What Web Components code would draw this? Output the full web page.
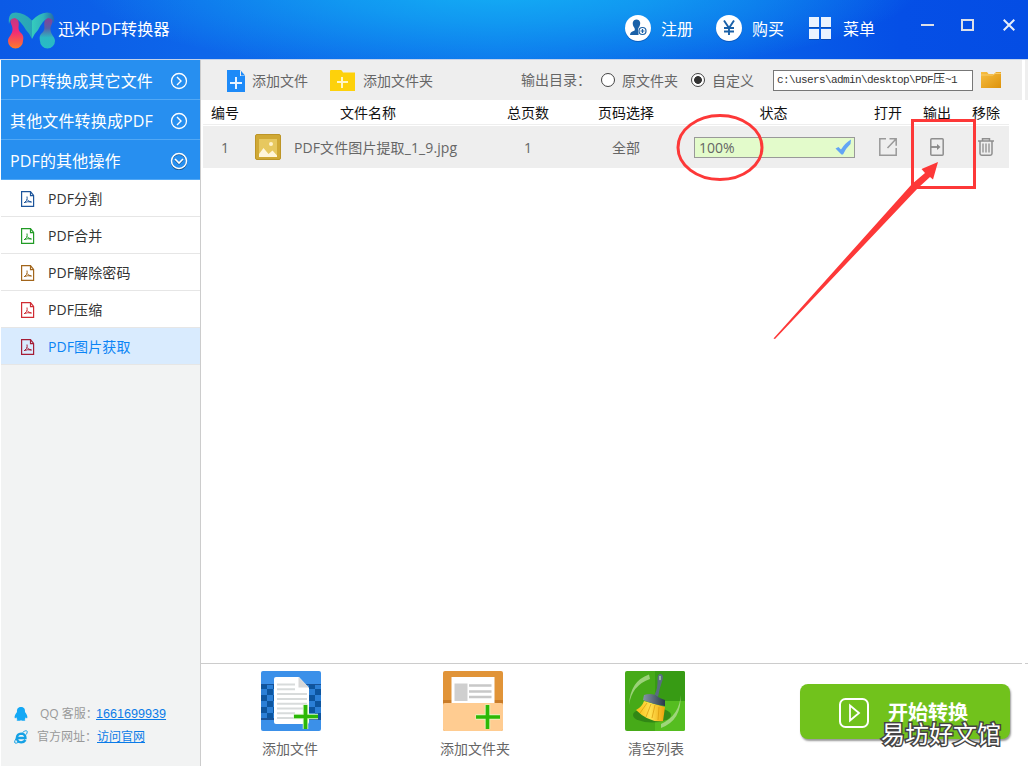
<!DOCTYPE html>
<html lang="zh-CN">
<head>
<meta charset="utf-8">
<title>迅米PDF转换器</title>
<style>
	body {
		margin: 0;
		width: 1028px;
		height: 766px;
		overflow: hidden;
		background: #fff;
		font: 14px/20px "Open Sans", "Noto Sans CJK SC", sans-serif;
		color: #666;
	}
</style>
</head>
<body>
<converter-app></converter-app>

<script>
const icons = {
	logo: [48, 38, `
		<defs>
			<linearGradient id="a" x1="0" y1="0" x2="0" y2="1"><stop offset="0" stop-color="#b93b86"/><stop offset=".45" stop-color="#f02a78"/><stop offset="1" stop-color="#ff7a2a"/></linearGradient>
			<linearGradient id="b" x1="0" y1="0" x2="0" y2="1"><stop offset="0" stop-color="#8a3e96"/><stop offset=".35" stop-color="#5a5fa4"/><stop offset=".65" stop-color="#2bb8c4"/><stop offset="1" stop-color="#27bcc5"/></linearGradient>
			<linearGradient id="c"><stop offset="0" stop-color="#2fb0b5"/><stop offset="1" stop-color="#28a5b8"/></linearGradient>
			<linearGradient id="d"><stop offset="0" stop-color="#35ccbd"/><stop offset=".5" stop-color="#30b4bb"/><stop offset="1" stop-color="#2469a8"/></linearGradient>
		</defs>
		<path d="M4 6q4-2 6 2c2 5-1 8 2 12 4 3 3.500 6 3 9a7.300 7.300 0 0 1-15 0c0-4 4-6 4.500-11C4.800 13 2 12 2.500 8Z" fill="url(#a)"/>
		<path d="M43 6q-4-2-6 2c-2 5 1 8-2 12-4 3-3.500 6-3 9a7.300 7.300 0 0 0 15 0c0-4-4-6-4.500-11-.3-5 2.500-6 2-10Z" fill="url(#b)"/>
		<path d="M1 12C0 3 3 .500 8 .500q9 .5 16 8V27q-2-5-6-9Q12 8 7 6 2 6 1 12Z" fill="url(#c)"/>
		<path d="M46 12C47 3 44 .500 39 .500q-8 .5-15 8V27q2-5 6-9 5-10 10-12 5 0 6 6Z" fill="url(#d)"/>`],
	register: [28, 28, `
		<circle cx="14" cy="15" r="13" fill="#08439c" opacity=".55"/><circle cx="14" cy="14" r="13" fill="#fff"/>
		<path d="M6 21q0-3 3.500-4 2-.5 1-3C7.500 10 8.500 5.500 12.500 5.500s5 4.500 2 8.500q-1 2 0 3v4Z" fill="#1a61a8"/>
		<circle cx="18.500" cy="17" r="4.300" fill="#fff"/><circle cx="18.500" cy="17" r="3.500" fill="#fff" stroke="#1a61a8" stroke-width="1.200"/><path d="M16.500 17h4M18.500 15v4" stroke="#1a61a8" stroke-width="1.200"/>`],
	yen: [28, 28, `
		<circle cx="14" cy="15" r="13" fill="#08439c" opacity=".55"/><circle cx="14" cy="14" r="13" fill="#fff"/>
		<path d="M9 6.500l5 7.500 5-7.500M14 13v8M9 14h10M9 17.500h10" fill="none" stroke="#1a61a8" stroke-width="1.900"/>`],
	grid: [22, 23, `
		<path d="M0 1h10v10H0zM12 1h10v10H12zM0 13h10v10H0zM12 13h10v10H12z" fill="#08439c" opacity=".7"/>
		<path d="M0 0h10v10H0zM12 0h10v10H12zM0 12h10v10H0zM12 12h10v10H12z" fill="#eaf3ff"/>`],
	min: [13, 13, `<path d="M0 6h13" stroke="#dcdfe8" stroke-width="2"/>`],
	max: [13, 13, `<path d="M1 1h11v10H1z" fill="none" stroke="#dcdfe8" stroke-width="2"/>`],
	close: [12, 12, `<path d="M.7.700l10.600 10.600M11.300.700.700 11.300" stroke="#e8eefa" stroke-width="2"/>`],
	right: [18, 18, `<circle cx="9" cy="9" r="7.500" fill="none" stroke="#fff" stroke-width="1.300"/><path d="M7 5l4 4-4 4" fill="none" stroke="#fff" stroke-width="1.400"/>`],
	down: [18, 18, `<circle cx="9" cy="9.800" r="7.500" fill="none" stroke="#18558d" stroke-width="1.500"/><circle cx="9" cy="9" r="7.500" fill="none" stroke="#fff" stroke-width="1.500"/><path d="M5 8l4 4 4-4" fill="none" stroke="#18558d" stroke-width="1.500"/><path d="M5 7l4 4 4-4" fill="none" stroke="#fff" stroke-width="1.600"/>`],
	pdf: [14, 16, `
		<path d="M9.500.600H.600v14.800h12V4.500L9.500.600v4h3.500" fill="none" stroke="currentColor" stroke-width="1.200"/>
		<path d="M6 5.500Q6.500 8 5.500 9.500L3 12M6.200 8.500q1 2 4.300 2.500-4-.8-7 .5" fill="none" stroke="currentColor"/>`],
	qq: [14, 14, `<path d="M7 0C3.500 0 2.800 2.500 3 5 1.500 7 .200 9 .700 11c.5.700 1.200-.3 1.500-.8.2 1 .8 1.600 1.300 2-1 .3-1.200 1.300 0 1.500 1.500.3 2.800 0 3.500-.5.7.5 2 .8 3.500.5 1.200-.2 1-1.200 0-1.500.5-.4 1.100-1 1.300-2 .3.500 1 1.500 1.500.8.4-2-.8-4-2.300-6C11.200 2.500 10.500 0 7 0Z" fill="#14a8f5"/>`],
	ie: [14, 14, `<path d="M11.500 10q-1.500 2.300-4.300 2.300Q3 12 2.800 8 3 4 7.200 3.700q4.300.3 4.300 4.300H4" fill="none" stroke="#15a1e5" stroke-width="2.300"/><path d="M8.500 2.500Q12.500-.5 13.200 1.500q.2 1.200-.9 3M3.500 6.500Q-.5 12 1 13q1 .7 4-1" fill="none" stroke="#15a1e5"/>`],
	newFile: [18, 22, `<path d="M0 0h13l5 6v16H0z" fill="#1d8af8"/><path d="M13 0v6h5z" fill="#eee"/><path d="M14 1 18 5.500H14z" fill="#1d8af8"/><path d="M9 7v12M3 13h12" stroke="#e9f3ff" stroke-width="2"/>`],
	newFolder: [25, 21, `<path d="M0 1q0-1 1-1h10q1 0 2 2.500h12V21H0z" fill="#fdd10b"/><path d="M12 7v11M7 12h11" stroke="#fff6c8" stroke-width="2"/>`],
	folder: [20, 16, `<defs><linearGradient id="f" x1="0" y1="0" x2="1" y2="1"><stop offset="0" stop-color="#f7be42"/><stop offset="1" stop-color="#dd920a"/></linearGradient></defs><path d="M0 0h6l1.500 2H13l2-2h5v16H0z" fill="url(#f)"/><path d="M0 3h12l2-1.500h6" fill="none" stroke="#fad47c" stroke-width=".8"/>`],
	image: [26, 26, `<rect x=".5" y=".5" width="25" height="25" rx="1.500" fill="#d0a935" stroke="#bd9527"/><path d="M4 5h18v18H4z" fill="#e7c85f"/><path d="M4 23v-3l4.500-6 5 6 4-3.500L22 21.500V23z" fill="#fff6da"/><circle cx="16" cy="10" r="2" fill="#fff3cc"/>`],
	check: [17, 16, `<path d="M.5 9.500 3.500 8 6 10.500Q10 4 16 .500L15.500 5Q11 9 8 15.500H6.500Z" fill="#62a5f5"/>`],
	open: [18, 18, `<path d="M7 .800H.800v16.400h16.400V10M10.500.800h6.700v7M17 1l-8.500 9" fill="none" stroke="#999" stroke-width="1.500"/>`],
	output: [14, 18, `<rect x=".8" y=".8" width="12.400" height="16.400" rx="1" fill="none" stroke="#8e8e8e" stroke-width="1.500"/><path d="M1 9h8" stroke="#888" stroke-width="1.800"/><path d="M7 6l3.500 3L7 12z" fill="#888"/>`],
	trash: [16, 18, `<path d="M0 3h16M4.500 3V.800h7V3M2 3v12.500q0 1.700 1.700 1.700h8.600q1.700 0 1.700-1.700V3" fill="none" stroke="#8e8e8e" stroke-width="1.500"/><path d="M5 5.500v9M8 5.500v9M11 5.500v9" stroke="#8e8e8e" stroke-width="1.300"/>`],
	bigFile: [60, 60, `
		<defs><pattern id="p" width="12" height="12" patternUnits="userSpaceOnUse"><path d="M0 0h6v6H0zM6 6h6v6H6z" fill="#0d559f"/></pattern></defs>
		<rect width="60" height="60" rx="2" fill="#3b90e9"/><path d="M0 13h60v36H0z" fill="#17539a"/><path d="M0 14h60v33H0z" fill="#2b7fd6"/><path d="M0 14h60v33H0z" fill="url(#p)"/>
		<path d="M15 6h23l10 11v34a2 2 0 0 1-2 2H15a2 2 0 0 1-2-2V8q0-2 2-2z" fill="#fff"/><path d="M37.500 6v10.500H48z" fill="#d8d8d8"/>
		<path d="M16 13.500h18M16 18.300h18M16 23.100h30M16 27.900h30M16 32.700h30M16 37.500h30M16 42.300h18M16 47h18" stroke="#d8dbdb" stroke-width="2"/>
		<path d="M44.500 33.500v24.500M32.500 45.500H57" stroke="#d7f5c8" stroke-width="5.500"/><path d="M44.500 34v24M33 45.500h24" stroke="#2bb806" stroke-width="3.700"/>`],
	bigFolder: [60, 60, `
		<rect width="60" height="60" rx="2" fill="#e19438"/><path d="M0 29h60v3H0z" fill="#ca7c28"/><path d="M8.500 6h43v26h-43z" fill="#fff"/>
		<path d="M11.500 12.500h13V30h-13z" fill="#cfcfcf"/><path d="M26 14.500h22.500M26 20.500h22.500M26 26h22.500" stroke="#c8c8c8" stroke-width="2.300"/>
		<path d="M0 34q0-2 2-2h56q2 0 2 2v24a2 2 0 0 1-2 2H2a2 2 0 0 1-2-2z" fill="#ffcc91"/>
		<path d="M44.500 33.500v24.500M32.500 46H57" stroke="#e5f4bd" stroke-width="5.500"/><path d="M44.500 34v24M33 46h24" stroke="#2bb806" stroke-width="3.700"/>`],
	bigBroom: [60, 60, `
		<defs>
			<linearGradient id="y"><stop offset="0" stop-color="#f9be16"/><stop offset=".5" stop-color="#ffe04f"/><stop offset="1" stop-color="#eda20c"/></linearGradient>
			<linearGradient id="s"><stop offset="0" stop-color="#8796a6"/><stop offset="1" stop-color="#28394a"/></linearGradient>
		</defs>
		<rect width="60" height="60" rx="2" fill="#46aa18"/><path d="M30 0h28q2 0 2 2v28H30z" fill="#379b14"/><path d="M30 30h30v28q0 2-2 2H30z" fill="#55bd20"/>
		<path d="M24 3.500Q5 10 4 34 7 14 25 8zM55.500 24Q55 44 36 53v4Q57 49 55.500 24Z" fill="#b0dc91" opacity=".8"/>
		<ellipse cx="27" cy="44" rx="19" ry="7.500" fill="#2c7e15" opacity=".8"/>
		<path d="M19 30 40 36 38 50q-14 2-27-11Q17 36 19 30Z" fill="url(#y)"/>
		<path d="M22 32 15 42M26 33 21 46M30 34l-3 13M34 36l-1 13" stroke="#d99a0c" stroke-width=".7"/>
		<path d="M29.500 24Q33 17 32.500 8q0-5 3-5 3.500.500 2 6-3 8-4.500 17Z" fill="#596d80"/><path d="M35 5.500v3" stroke="#a5c7ae" stroke-width="1.600" stroke-linecap="round"/>
		<path d="M19 24q6-2 11 0 6 4 10 5v6q-10-1-22-6z" fill="url(#s)"/>`],
	play: [30, 30, `<rect x="1" y="1" width="28" height="28" rx="5.500" fill="none" stroke="#fff" stroke-width="2"/><path d="M11 7.500v15l9-7.500z" fill="none" stroke="#fff" stroke-width="1.800"/>`]
};

class BaseElement extends HTMLElement {
	constructor() {
		super();
		this.attachShadow({mode: 'open'});
	}

	connectedCallback() {
		this.shadowRoot.innerHTML = `<style>${this.css()}</style>${this.html()}`;
	}
}

customElements.define('app-icon', class extends BaseElement {
	css() {
		return `:host { display: block; flex: none; } svg { display: block; }`;
	}

	html() {
		const [w, h, body] = icons[this.getAttribute('name')];
		return `<svg width="${w}" height="${h}" viewBox="0 0 ${w} ${h}">${body}</svg>`;
	}
});

customElements.define('title-bar', class extends BaseElement {
	css() {
		return `
			:host {
				display: flex;
				box-sizing: border-box;
				height: 60px;
				padding-left: 8px;
				border-bottom: 1px solid #c3d3ec;
				color: #fff;
				font-size: 16px;
				line-height: 58px;
				background:
					radial-gradient(ellipse 420px 90px at 500px -14px, #14b0f5 0%, rgba(18, 160, 242, .85) 40%, rgba(12, 100, 232, 0) 100%),
					linear-gradient(90deg, #0b5ae6 0, #0d66ea 200px, #0c70ec 500px, #0860e8 750px, #054fe6 900px, #044de4 100%);
			}
			.logo { margin-top: 12px; }
			.name { width: 566px; margin-left: 2px; letter-spacing: .3px; }
			.action { display: flex; }
			.action app-icon { margin: 14px 9px 0 0; }
			.action span { width: 54px; }
			.menu { margin-left: 3px; }
			.menu app-icon { margin: 17px 12px 0 0; }
			.menu span { width: 78px; }
			.win { margin-top: 19px; }
			.max { margin-left: 27px; }
			.close { margin-left: 29px; }
		`;
	}

	html() {
		return `
			<app-icon class="logo" name="logo"></app-icon>
			<span class="name">迅米PDF转换器</span>
			<div class="action"><app-icon name="register"></app-icon><span>注册</span></div>
			<div class="action"><app-icon name="yen"></app-icon><span>购买</span></div>
			<div class="action menu"><app-icon name="grid"></app-icon><span>菜单</span></div>
			<app-icon class="win" name="min"></app-icon>
			<app-icon class="win max" name="max"></app-icon>
			<app-icon class="win close" name="close"></app-icon>
		`;
	}
});

customElements.define('nav-group', class extends BaseElement {
	css() {
		return `
			:host {
				display: flex;
				align-items: center;
				justify-content: space-between;
				box-sizing: border-box;
				height: 40px;
				padding: 2px 12px 0 9px;
				border-bottom: 1px solid #52a8f5;
				background: #278ff0;
				color: #fff;
				font-size: 16px;
				letter-spacing: .15px;
			}
		`;
	}

	html() {
		return `<slot></slot><app-icon name="${this.getAttribute('icon')}"></app-icon>`;
	}
});

customElements.define('nav-item', class extends BaseElement {
	css() {
		return `
			:host {
				display: flex;
				align-items: center;
				gap: 13px;
				box-sizing: border-box;
				height: 37px;
				padding: 1px 0 0 20px;
				border-bottom: 1px solid #e6e6e6;
				background: #fff;
				color: #333;
				letter-spacing: .1px;
			}
			:host([active]) { background: #d9ebfe; color: #0a84f5; }
			app-icon { color: ${this.getAttribute('tint')}; }
		`;
	}

	html() {
		return `<app-icon name="pdf"></app-icon><slot></slot>`;
	}
});

customElements.define('side-bar', class extends BaseElement {
	css() {
		return `
			:host {
				display: flex;
				flex-direction: column;
				box-sizing: border-box;
				width: 201px;
				border-left: 1px solid #fff;
				border-right: 1px solid #ccc;
				background: #f2f3f3;
			}
			.contact { margin: auto 0 18px; color: #999; font-size: 12px; }
			.contact div { display: flex; align-items: center; height: 23px; padding-left: 12px; }
			.contact app-icon { margin-left: 1px; }
			.contact span { width: 56px; margin-left: 12px; white-space: nowrap; }
			.contact div + div span { width: 60px; margin-left: 9px; }
			a { color: #0a7be8; text-decoration: underline; }
			.number { font: 12.6px/20px "Liberation Sans", sans-serif; }
		`;
	}

	html() {
		return `
			<nav-group icon="right">PDF转换成其它文件</nav-group>
			<nav-group icon="right">其他文件转换成PDF</nav-group>
			<nav-group icon="down">PDF的其他操作</nav-group>
			<nav-item tint="#1d559b">PDF分割</nav-item>
			<nav-item tint="#219b25">PDF合并</nav-item>
			<nav-item tint="#a2651b">PDF解除密码</nav-item>
			<nav-item tint="#d02c33">PDF压缩</nav-item>
			<nav-item tint="#a51d36" active>PDF图片获取</nav-item>
			<div class="contact">
				<div><app-icon name="qq"></app-icon><span>QQ 客服：</span><a class="number">1661699939</a></div>
				<div><app-icon name="ie"></app-icon><span>官方网址：</span><a>访问官网</a></div>
			</div>
		`;
	}
});

customElements.define('tool-bar', class extends BaseElement {
	css() {
		return `
			:host {
				display: flex;
				align-items: center;
				box-sizing: border-box;
				height: 40px;
				padding: 2px 0 0 26px;
				white-space: nowrap;
				background: linear-gradient(90deg, #eee 821px, #fff 821px 824px, #eee 824px);
			}
			app-icon { margin-top: -1px; }
			.file { width: 78px; margin-left: 7px; }
			.folder { width: 158px; margin-left: 8px; }
			.label { width: 80px; margin-top: -3px; }
			.radio {
				box-sizing: border-box;
				width: 14px;
				height: 14px;
				margin: -3px 7px 0 0;
				border: 1px solid #444;
				border-radius: 50%;
				background: #fff;
			}
			.on { background: radial-gradient(circle, #333 3.5px, #fff 4.3px); }
			.origin { width: 69px; }
			.custom { width: 61px; }
			.path {
				box-sizing: border-box;
				width: 200px;
				height: 21px;
				margin: -1px 8px 0 0;
				padding-left: 3px;
				border: 1px solid #777;
				background: #fff;
				color: #333;
				font: 11px/18px "Liberation Mono", "Noto Sans CJK SC", monospace;
				letter-spacing: -.6px;
			}
			.path b { font-weight: 400; font-size: 12px; letter-spacing: 0; line-height: 1; }
			.browse { margin-top: -2px; }
		`;
	}

	html() {
		return `
			<app-icon name="newFile"></app-icon><span class="file">添加文件</span>
			<app-icon name="newFolder"></app-icon><span class="folder">添加文件夹</span>
			<span class="label">输出目录：</span>
			<i class="radio"></i><span class="origin">原文件夹</span>
			<i class="radio on"></i><span class="custom">自定义</span>
			<div class="path">c:\\users\\admin\\desktop\\PDF<b>压</b>~1</div>
			<app-icon class="browse" name="folder"></app-icon>
		`;
	}
});

customElements.define('file-table', class extends BaseElement {
	css() {
		return `
			:host { display: block; flex: 1; padding-left: 2px; }
			.head, .row {
				display: grid;
				grid-template-columns: 44px 242px 78px 118px 177px 52px 46px 49px;
				width: 806px;
				justify-items: center;
				align-items: center;
				white-space: nowrap;
			}
			.head { height: 23px; padding-top: 1px; border-bottom: 1px solid #eee; color: #111; line-height: 22px; }
			.row { height: 42px; margin-top: 1px; background: #eee; }
			.row span { padding-top: 1px; }
			.file { display: flex; align-items: center; justify-self: start; gap: 13px; padding-left: 8px; letter-spacing: .1px; }
			.progress {
				display: flex;
				align-items: center;
				justify-content: space-between;
				justify-self: start;
				box-sizing: border-box;
				width: 161px;
				height: 21px;
				margin-left: 9px;
				padding: 0 2px 0 4px;
				border: 1px solid #999;
				background: #e3fbcb;
			}
			.progress span { padding-top: 2px; }
			.last { margin-left: 3px; }
		`;
	}

	html() {
		return `
			<div class="head">
				<span>编号</span><span>文件名称</span><span>总页数</span><span>页码选择</span>
				<span>状态</span><span>打开</span><span>输出</span><span class="last">移除</span>
			</div>
			<div class="row">
				<span>1</span>
				<div class="file"><app-icon name="image"></app-icon><span>PDF文件图片提取_1_9.jpg</span></div>
				<span>1</span>
				<span>全部</span>
				<div class="progress"><span>100%</span><app-icon name="check"></app-icon></div>
				<app-icon name="open"></app-icon>
				<app-icon name="output"></app-icon>
				<app-icon class="last" name="trash"></app-icon>
			</div>
		`;
	}
});

customElements.define('action-tile', class extends BaseElement {
	css() {
		return `
			:host { display: flex; flex-direction: column; align-items: center; gap: 8px; width: 60px; white-space: nowrap; }
			span { margin-left: calc(var(--nudge, 0px) * 2); }
		`;
	}

	html() {
		return `<app-icon name="${this.getAttribute('icon')}"></app-icon><span><slot></slot></span>`;
	}
});

customElements.define('start-button', class extends BaseElement {
	css() {
		return `
			:host {
				display: flex;
				align-items: center;
				gap: 19px;
				box-sizing: border-box;
				width: 210px;
				height: 55px;
				padding: 2px 0 0 39px;
				border-radius: 8px;
				background: #71c21c;
				box-shadow: 1px 2px 2px #999;
				color: #fff;
				font-size: 20px;
				font-weight: 700;
				white-space: nowrap;
			}
		`;
	}

	html() {
		return `<app-icon name="play"></app-icon><slot></slot>`;
	}
});

customElements.define('action-bar', class extends BaseElement {
	css() {
		return `
			:host {
				display: flex;
				box-sizing: border-box;
				height: 103px;
				padding: 8px 0 0 60px;
				gap: 122px;
				background: linear-gradient(90deg, #ccc 821px, #fff 821px 824px, #ccc 824px) top / 100% 1px no-repeat;
			}
			start-button { margin: 13px 0 0 -7px; }
		`;
	}

	html() {
		return `
			<action-tile icon="bigFile" style="--nudge: -1px">添加文件</action-tile>
			<action-tile icon="bigFolder" style="--nudge: 2px">添加文件夹</action-tile>
			<action-tile icon="bigBroom" style="--nudge: 1px">清空列表</action-tile>
			<start-button>开始转换</start-button>
		`;
	}
});

// red marks and the site name lie over the whole window
customElements.define('mark-layer', class extends BaseElement {
	css() {
		return `
			:host { position: absolute; inset: 0; width: 1028px; height: 766px; pointer-events: none; }
			svg { display: block; }
			span {
				position: absolute;
				left: 881px;
				top: 718px;
				color: #fff;
				font-size: 24px;
				line-height: 32px;
				white-space: nowrap;
				-webkit-text-stroke: 3px #444;
				paint-order: stroke fill;
			}
		`;
	}

	html() {
		return `
			<svg width="1028" height="766" fill="none" stroke="#fd3838" stroke-width="3">
				<ellipse cx="720" cy="147.500" rx="42" ry="32"/>
				<rect x="912.500" y="120.500" width="62" height="67"/>
				<path d="M773.500 338.500 912 184 925 173 921.500 169 938 162 933 179.500 930 177 918 188 775 339Z" fill="#fd3838" stroke="none"/>
			</svg>
			<span>易坊好文馆</span>
		`;
	}
});

customElements.define('converter-app', class extends BaseElement {
	css() {
		return `
			:host { display: flex; flex-direction: column; position: relative; width: 1028px; height: 766px; }
			.body { display: flex; flex: 1; }
			main { display: flex; flex-direction: column; flex: 1; }
		`;
	}

	html() {
		return `
			<title-bar></title-bar>
			<div class="body">
				<side-bar></side-bar>
				<main>
					<tool-bar></tool-bar>
					<file-table></file-table>
					<action-bar></action-bar>
				</main>
			</div>
			<mark-layer></mark-layer>
		`;
	}
});
</script>
</body>
</html>
